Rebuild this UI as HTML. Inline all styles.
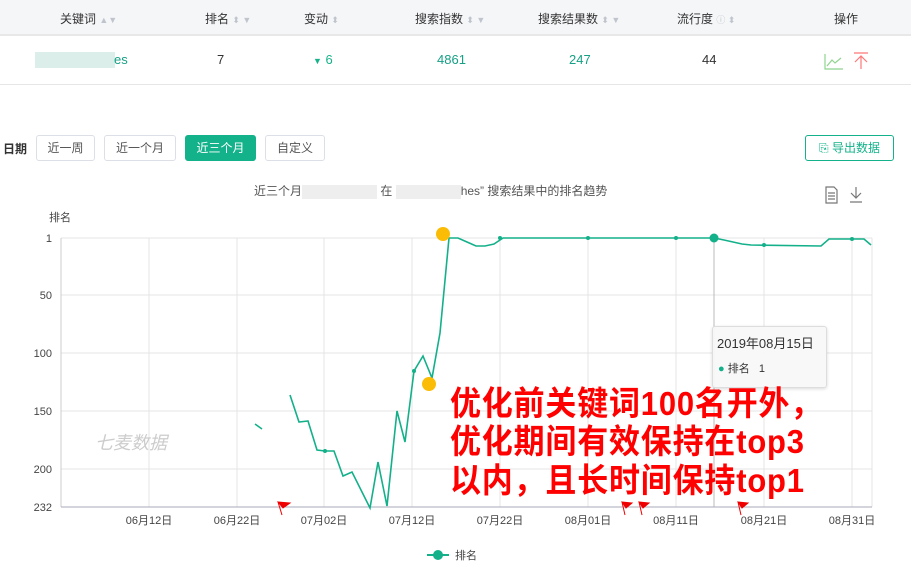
<!DOCTYPE html>
<html><head><meta charset="utf-8"><style>
*{margin:0;padding:0;box-sizing:border-box}
body{width:911px;height:564px;background:#fff;font-family:"Liberation Sans","Noto Sans CJK SC",sans-serif;position:relative;overflow:hidden;color:#333}
.a{position:absolute;white-space:nowrap}
.hd{position:absolute;left:0;top:0;width:911px;height:36px;background:#f5f6f8;border-bottom:2px solid #e8e8e8}
.th{position:absolute;top:10px;font-size:12px;color:#333}
.ar{color:#c0c4cc;font-size:9px}
.td{position:absolute;top:52px;font-size:13px}
.btn{position:absolute;top:135px;height:26px;border:1px solid #dcdfe6;border-radius:3px;font-size:12px;color:#555;text-align:center;line-height:24px}
.red{position:absolute;left:450px;color:#f00;font-weight:bold;font-size:31px;font-family:"Liberation Sans","Noto Sans CJK SC",sans-serif;letter-spacing:0.8px;line-height:36px;white-space:nowrap;transform:scaleY(1.08);transform-origin:top left}
</style></head><body>
<div class="hd"></div>
<div class="th" style="left:60px">关键词 <span class="ar">▲▼</span></div>
<div class="th" style="left:205px">排名 <span class="ar">⬍ ▼</span></div>
<div class="th" style="left:304px">变动 <span class="ar">⬍</span></div>
<div class="th" style="left:415px">搜索指数 <span class="ar">⬍ ▼</span></div>
<div class="th" style="left:538px">搜索结果数 <span class="ar">⬍ ▼</span></div>
<div class="th" style="left:677px">流行度 <span class="ar">ⓘ ⬍</span></div>
<div class="th" style="left:834px">操作</div>
<div class="a" style="left:0;top:84px;width:911px;height:1px;background:#e6e6e6"></div>
<div class="a" style="left:35px;top:52px;width:80px;height:16px;background:#dceee9"></div>
<div class="td" style="left:114px;color:#16a085">es</div>
<div class="td" style="left:217px">7</div>
<div class="td" style="left:313px;color:#16b38a"><span style="font-size:9px">▼</span> 6</div>
<div class="td" style="left:437px;color:#16a085">4861</div>
<div class="td" style="left:569px;color:#16a085">247</div>
<div class="td" style="left:702px">44</div>
<svg class="a" style="left:824px;top:52px" width="20" height="18"><path d="M1 2V17H19M3 14L8 8L11 11L17 6" fill="none" stroke="#8fd48f" stroke-width="1.2"/></svg>
<svg class="a" style="left:852px;top:52px" width="18" height="18"><path d="M2 1H16M9 4V17M3 10L9 4L15 10" fill="none" stroke="#f77" stroke-width="1.2"/></svg>

<div class="a" style="left:3px;top:140px;font-size:12px;font-weight:bold">日期</div>
<div class="btn" style="left:36px;width:59px">近一周</div>
<div class="btn" style="left:104px;width:72px">近一个月</div>
<div class="btn" style="left:185px;width:71px;background:#13b28a;border-color:#13b28a;color:#fff">近三个月</div>
<div class="btn" style="left:265px;width:60px">自定义</div>
<div class="btn" style="left:805px;width:89px;border-color:#13b28a;color:#13b28a">⎘ 导出数据</div>

<div class="a" style="left:254px;top:182px;font-size:12px;color:#555">近三个月<span style="display:inline-block;width:75px;height:14px;background:#eee;vertical-align:middle"></span> 在 <span style="display:inline-block;width:65px;height:14px;background:#eee;vertical-align:middle"></span>hes” 搜索结果中的排名趋势</div>
<svg class="a" style="left:824px;top:185px" width="46" height="20"><path d="M2 2H10L13 5V18H2ZM4 8H11M4 11H11M4 14H11" fill="none" stroke="#777" stroke-width="1.2"/><path d="M32 2V13M27 8L32 13L37 8M26 17H38" fill="none" stroke="#777" stroke-width="1.2"/></svg>

<div class="a" style="left:49px;top:209px;font-size:11px;color:#444">排名</div>
<svg class="a" style="left:0;top:0" width="911" height="564">
<g stroke="#e4e4e4" stroke-width="1">
<line x1="61" y1="238" x2="872" y2="238"/><line x1="61" y1="295" x2="872" y2="295"/><line x1="61" y1="353" x2="872" y2="353"/><line x1="61" y1="411" x2="872" y2="411"/><line x1="61" y1="469" x2="872" y2="469"/>
<line x1="149" y1="238" x2="149" y2="507"/><line x1="237" y1="238" x2="237" y2="507"/><line x1="324" y1="238" x2="324" y2="507"/><line x1="412" y1="238" x2="412" y2="507"/><line x1="500" y1="238" x2="500" y2="507"/><line x1="588" y1="238" x2="588" y2="507"/><line x1="676" y1="238" x2="676" y2="507"/><line x1="764" y1="238" x2="764" y2="507"/><line x1="852" y1="238" x2="852" y2="507"/><line x1="872" y1="238" x2="872" y2="507"/>
</g>
<line x1="714" y1="238" x2="714" y2="507" stroke="#bbb"/>
<line x1="61" y1="238" x2="61" y2="507" stroke="#ccc"/>
<line x1="61" y1="507" x2="872" y2="507" stroke="#aab"/>
<g font-size="11" fill="#444" font-family="Liberation Sans, Noto Sans CJK SC, sans-serif" text-anchor="end">
<text x="52" y="242">1</text><text x="52" y="299">50</text><text x="52" y="357">100</text><text x="52" y="415">150</text><text x="52" y="473">200</text><text x="52" y="511">232</text></g>
<g font-size="11" fill="#444" font-family="Liberation Sans, Noto Sans CJK SC, sans-serif" text-anchor="middle">
<text x="149" y="524">06月12日</text><text x="237" y="524">06月22日</text><text x="324" y="524">07月02日</text><text x="412" y="524">07月12日</text><text x="500" y="524">07月22日</text><text x="588" y="524">08月01日</text><text x="676" y="524">08月11日</text><text x="764" y="524">08月21日</text><text x="852" y="524">08月31日</text></g>
<text x="95" y="449" font-size="18" fill="#ccc" font-style="italic" font-family="Liberation Sans, Noto Sans CJK SC, sans-serif">七麦数据</text>
<g fill="none" stroke="#13b08a" stroke-width="1.6">
<polyline points="255,424 262,429"/>
<polyline points="290,395 299,422 308,421 317,450 325,451 334,451 343,476 352,472 361,490 370,508 378,462 387,506 397,411 405,442 414,371 423,356 432,378 440,333 449,238 458,238 467,242 476,246 485,246 494,244 503,238 714,238 724,240 733,242 742,244 751,245 821,246 829,239 838,239 847,239 864,239 871,245"/>
</g>
<g fill="#13b08a"><circle cx="500" cy="238" r="2"/><circle cx="588" cy="238" r="2"/><circle cx="676" cy="238" r="2"/><circle cx="764" cy="245" r="2"/><circle cx="852" cy="239" r="2"/><circle cx="714" cy="238" r="4.5"/><circle cx="414" cy="371" r="2"/><circle cx="325" cy="451" r="2"/></g>
<circle cx="443" cy="234" r="7" fill="#fbbc05"/><circle cx="429" cy="384" r="7" fill="#fbbc05"/>
<g fill="#e00" stroke="#e00"><path d="M278 502L290 503L283 508Z"/><line x1="278" y1="502" x2="282" y2="515"/>
<path d="M622 502L632 503L626 508Z"/><line x1="622" y1="502" x2="625" y2="515"/>
<path d="M639 502L649 503L643 508Z"/><line x1="639" y1="502" x2="642" y2="515"/>
<path d="M738 502L748 503L742 508Z"/><line x1="738" y1="502" x2="741" y2="515"/></g>
<line x1="427" y1="555" x2="449" y2="555" stroke="#13b08a" stroke-width="2"/><circle cx="438" cy="555" r="5" fill="#13b08a"/>
<text x="455" y="559" font-size="11" fill="#444" font-family="Liberation Sans, Noto Sans CJK SC, sans-serif">排名</text>
</svg>
<div class="a" style="left:712px;top:326px;width:115px;height:62px;background:rgba(248,248,248,.95);border:1px solid #ddd;border-radius:3px;box-shadow:0 1px 3px rgba(0,0,0,.15)">
<div style="position:absolute;left:4px;top:6px;font-size:13px;color:#333">2019年08月15日</div>
<div style="position:absolute;left:5px;top:33px;font-size:11px;color:#333"><span style="color:#13b08a">●</span> 排名&nbsp;&nbsp;&nbsp;1</div></div>
<div class="red" style="top:385px">优化前关键词100名开外，</div>
<div class="red" style="top:423px">优化期间有效保持在top3</div>
<div class="red" style="top:462px">以内，且长时间保持top1</div>
</body></html>
